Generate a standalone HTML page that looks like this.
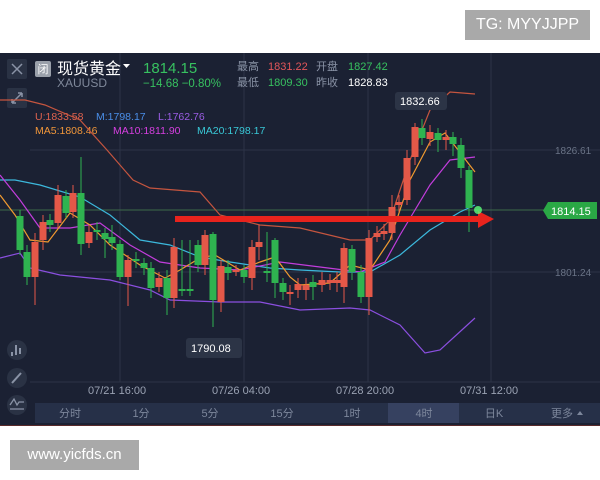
<!DOCTYPE html>
<html><head><meta charset="utf-8"><style>
body{margin:0;width:600px;height:480px;background:#fff;position:relative;overflow:hidden;font-family:"Liberation Sans","Noto Sans CJK SC",sans-serif}
.tg{position:absolute;left:465px;top:10px;width:125px;height:30px;background:#a9a9a9;color:#fff;font-size:16px;line-height:30px;text-align:center}
.wm{position:absolute;left:10px;top:440px;width:129px;height:30px;background:#a9a9a9;color:#fff;font-size:15px;line-height:30px;text-align:center}
svg{position:absolute;left:0;top:53px}
</style></head><body>
<div class="tg">TG: MYYJJPP</div>
<svg width="600" height="373" viewBox="0 53 600 373" font-family="Liberation Sans, Noto Sans CJK SC, sans-serif">
<rect x="0" y="53" width="600" height="373" fill="#1b2133"/>
<g stroke="#2c3447" stroke-width="1">
<line x1="120" y1="53" x2="120" y2="382"/><line x1="244" y1="53" x2="244" y2="382"/><line x1="368" y1="53" x2="368" y2="382"/><line x1="491" y1="53" x2="491" y2="382"/>
<line x1="30" y1="150" x2="600" y2="150"/><line x1="30" y1="272" x2="600" y2="272"/><line x1="30" y1="382" x2="600" y2="382"/>
</g>
<line x1="0" y1="210" x2="545" y2="210" stroke="#3c6a4a" stroke-width="1"/>
<rect x="7" y="59" width="20" height="20" rx="2" fill="#2a3244"/>
<path d="M12 64 L22 74 M22 64 L12 74" stroke="#8a93a6" stroke-width="1.5"/>
<rect x="7" y="88" width="20" height="20" rx="2" fill="#2a3244"/>
<path d="M12 103 L22 93 M12 103 l0 -4 M12 103 l4 0 M22 93 l-4 0 M22 93 l0 4" stroke="#8a93a6" stroke-width="1.5"/>
<rect x="35" y="61" width="16" height="16" rx="2" fill="#9aa0aa"/>
<text x="43" y="73" font-size="11" fill="#fff" text-anchor="middle">闭</text>
<text x="57" y="74" font-size="16" fill="#fff">现货黄金</text>
<path d="M123 64 l7 0 l-3.5 4z" fill="#fff"/>
<text x="57" y="87" font-size="12" fill="#7f889a">XAUUSD</text>
<text x="143" y="73" font-size="15" fill="#37c160">1814.15</text>
<text x="143" y="87" font-size="11.5" fill="#37c160">−14.68  −0.80%</text>
<text x="237" y="70" font-size="11" fill="#8a93a6">最高</text><text x="268" y="70" font-size="11" fill="#e2565a">1831.22</text>
<text x="316" y="70" font-size="11" fill="#8a93a6">开盘</text><text x="348" y="70" font-size="11" fill="#37c160">1827.42</text>
<text x="237" y="86" font-size="11" fill="#8a93a6">最低</text><text x="268" y="86" font-size="11" fill="#37c160">1809.30</text>
<text x="316" y="86" font-size="11" fill="#8a93a6">昨收</text><text x="348" y="86" font-size="11" fill="#fff">1828.83</text>
<text x="35" y="120" font-size="10.5" fill="#e0634f">U:1833.58</text><text x="96" y="120" font-size="10.5" fill="#4a8ee8">M:1798.17</text><text x="158" y="120" font-size="10.5" fill="#9b5de5">L:1762.76</text>
<text x="35" y="134" font-size="10.5" fill="#f0963a">MA5:1808.46</text><text x="113" y="134" font-size="10.5" fill="#d63fe0">MA10:1811.90</text><text x="197" y="134" font-size="10.5" fill="#39c7d6">MA20:1798.17</text>
<g fill="none" stroke-width="1.2">
<polyline stroke="#c5553f" points="0,100 25,100 45,105 80,120 107,150 133,180 150,188 200,192 220,215 240,220 260,225 300,228 350,240 370,240 390,220 410,160 430,110 450,92 475,94"/>
<polyline stroke="#8b4fe0" points="0,258 20,253 30,268 60,275 110,280 150,290 170,300 220,302 260,302 300,310 350,308 370,310 400,325 425,353 440,350 475,318"/>
<polyline stroke="#3cb8dc" points="0,180 15,180 40,185 80,197 110,215 140,240 170,245 200,257 230,262 270,268 300,270 340,272 370,272 400,255 430,230 460,212 475,205"/>
<polyline stroke="#c23ddc" points="0,175 20,200 40,228 70,228 100,223 130,245 160,262 200,268 240,270 280,262 320,267 360,272 385,262 400,235 430,185 450,160 475,157"/>
<polyline stroke="#f09a30" points="0,195 15,215 30,240 48,242 70,213 90,225 110,245 140,265 165,278 180,270 200,258 215,255 240,270 260,262 275,257 290,277 300,285 330,283 350,265 370,270 390,240 410,180 430,142 445,133 475,172"/>
</g>
<g id="c"></g>
<rect x="175" y="216" width="305" height="6" fill="#e8231d"/>
<path d="M478 211 L494 219 L478 228 Z" fill="#e8231d"/>
<circle cx="478" cy="210" r="4" fill="#5cff7a" opacity=".8"/>
<text x="555" y="154" font-size="10" fill="#6a7386">1826.61</text>
<text x="555" y="276" font-size="10" fill="#6a7386">1801.24</text>
<path d="M548 202 L597 202 L597 219 L548 219 L543 210.5 Z" fill="#2aa845"/>
<text x="551" y="215" font-size="11" fill="#fff">1814.15</text>
<rect x="395" y="92" width="52" height="18" rx="3" fill="#2c3446"/>
<text x="400" y="105" font-size="11" fill="#fff">1832.66</text>
<rect x="186" y="338" width="56" height="20" rx="3" fill="#2c3446"/>
<text x="191" y="352" font-size="11" fill="#fff">1790.08</text>
<g font-size="11" fill="#9aa2b3"><text x="88" y="394">07/21 16:00</text><text x="212" y="394">07/26 04:00</text><text x="336" y="394">07/28 20:00</text><text x="460" y="394">07/31 12:00</text></g>
<circle cx="17" cy="350" r="10" fill="#2a3244"/><path d="M11 352h2v4h-2zM15 345h2v10h-2zM19 348h2v6h-2z" fill="#8a93a6"/>
<circle cx="17" cy="378" r="10" fill="#2a3244"/><path d="M12 383 L21 373" stroke="#8a93a6" stroke-width="2"/>
<circle cx="17" cy="405" r="10" fill="#2a3244"/><path d="M10 405 L14 399 L17 405 L19 402 L24 402 M10 409 L24 409" stroke="#8a93a6" stroke-width="1.3" fill="none"/>
<rect x="35" y="403" width="565" height="20" fill="#263048"/>
<rect x="388" y="403" width="71" height="20" fill="#364160"/>
<g font-size="11" fill="#7d879c" text-anchor="middle"><text x="70" y="417">分时</text><text x="141" y="417">1分</text><text x="210" y="417">5分</text><text x="282" y="417">15分</text><text x="352" y="417">1时</text><text x="424" y="417">4时</text><text x="494" y="417">日K</text><text x="562" y="417">更多</text></g>
<path d="M577 415 l6 0 l-3 -4z" fill="#7d879c"/>
<rect x="0" y="425" width="600" height="1" fill="#5a2a2a"/>
</svg>
<script>
var G="#2fb350",R="#e45848";
var d=[[20,216,250,210,255,G],[27,252,277,245,285,G],[35,242,277,233,305,R],[43,222,240,215,250,R],[50,220,225,214,232,G],[58,195,223,185,228,R],[66,196,213,190,218,G],[73,193,212,185,218,R],[81,193,244,157,255,G],[89,232,243,225,248,R],[97,230,232,222,240,G],[105,233,239,228,258,G],[112,237,243,225,250,G],[120,244,277,240,280,G],[128,260,277,255,306,R],[136,259,261,252,268,G],[144,263,268,258,275,G],[151,268,288,262,298,G],[159,278,287,272,292,R],[167,278,298,270,315,G],[174,247,298,238,308,R],[182,289,291,240,296,G],[190,289,291,240,296,G],[198,245,265,240,272,G],[205,235,265,230,275,R],[213,234,300,232,327,G],[221,266,302,260,312,R],[228,267,273,260,280,G],[236,270,272,265,276,R],[244,270,277,265,283,G],[252,247,278,240,290,R],[259,242,247,225,260,R],[267,271,273,232,282,G],[275,240,283,238,298,G],[283,283,292,278,300,G],[290,292,294,285,305,R],[298,284,290,278,298,R],[306,285,290,278,300,R],[313,282,287,275,300,G],[322,280,285,272,292,R],[330,280,283,274,290,R],[337,280,283,272,292,R],[344,248,287,243,303,R],[352,249,272,245,280,G],[361,272,297,265,303,G],[369,238,297,230,315,R],[377,233,237,226,242,R],[384,231,234,224,240,R],[392,207,233,195,240,R],[399,202,205,195,212,R],[407,158,200,150,205,R],[415,127,157,123,165,R],[422,128,138,119,145,G],[430,132,139,125,146,R],[438,133,140,128,152,G],[446,137,140,130,150,R],[453,137,144,132,156,G],[461,145,168,138,178,G],[469,170,208,166,232,G]];
var s="";d.forEach(function(c){s+='<line x1="'+c[0]+'" x2="'+c[0]+'" y1="'+c[3]+'" y2="'+c[4]+'" stroke="'+c[5]+'" stroke-width="1"/><rect x="'+(c[0]-3.5)+'" y="'+c[1]+'" width="7" height="'+Math.max(2,c[2]-c[1])+'" fill="'+c[5]+'"/>';});
document.getElementById("c").innerHTML=s;
</script>
<div class="wm">www.yicfds.cn</div>
</body></html>
